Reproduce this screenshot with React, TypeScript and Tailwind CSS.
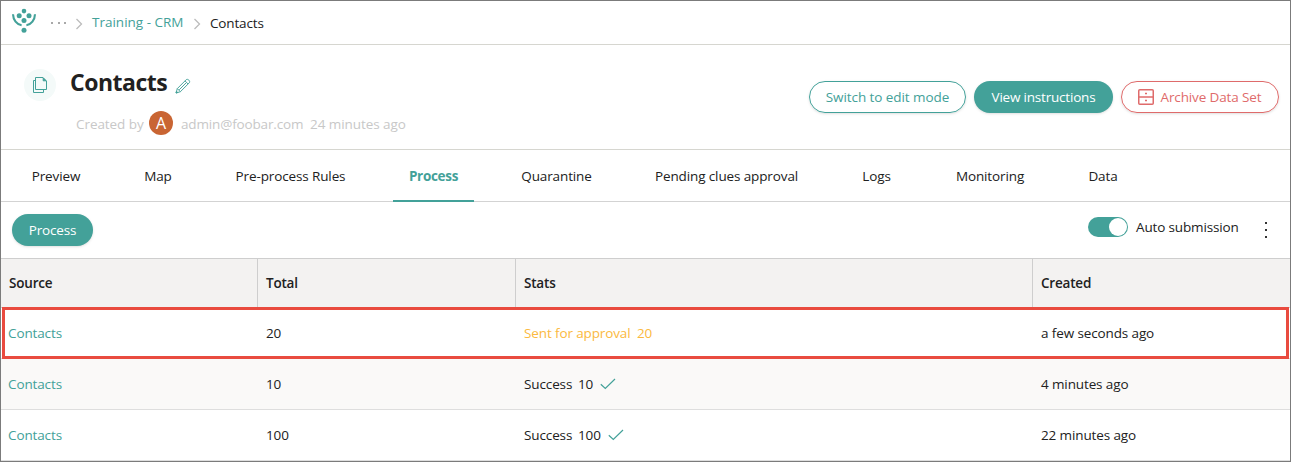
import React from "react";

const tabs = [
  { label: "Preview", box: "w-[80px]" },
  { label: "Map", box: "w-[60px]" },
  { label: "Pre-process Rules", box: "w-[141px]" },
  { label: "Process", box: "w-[81px]", active: true },
  { label: "Quarantine", box: "w-[101px]" },
  { label: "Pending clues approval", box: "w-[175px]" },
  { label: "Logs", box: "w-[61px]" },
  { label: "Monitoring", box: "w-[102px]" },
  { label: "Data", box: "w-[60px]" },
];

const rows = [
  { total: "20", status: "Sent for approval", count: "20", created: "a few seconds ago", pending: true },
  { total: "10", status: "Success", count: "10", created: "4 minutes ago" },
  { total: "100", status: "Success", count: "100", created: "22 minutes ago" },
];

const columns = "grid grid-cols-[257px_258px_517px_1fr]";

function Logo() {
  return (
    <svg width="26" height="26" viewBox="0 0 26 26" className="shrink-0" fill="#43a199">
      <path d="M2 6.2C2.2 12 5.8 16.6 10.6 17.3M24 6.2C23.8 12 20.2 16.6 15.4 17.3" fill="none" stroke="#43a199" strokeWidth="2.1" />
      <circle cx="13" cy="3.1" r="2.3" />
      <circle cx="8.2" cy="7.8" r="2.5" />
      <circle cx="18" cy="7.8" r="2.5" />
      <circle cx="13" cy="12.4" r="2.5" />
      <circle cx="13" cy="22.3" r="2.5" />
    </svg>
  );
}

function Chevron() {
  return (
    <svg width="8" height="12" viewBox="0 0 8 12" fill="none" stroke="#bcbcbc" strokeWidth="1.3">
      <path d="M1.5 1L6.5 6L1.5 11" />
    </svg>
  );
}

function Check() {
  return (
    <svg width="16" height="12" viewBox="0 0 16 12" fill="none" stroke="#43a199" strokeWidth="1.2">
      <path d="M0.8 6.2L5.3 10.5L15 1" />
    </svg>
  );
}

function Copy() {
  return (
    <svg width="16" height="18" viewBox="0 0 16 18" fill="none" stroke="#43a199" strokeWidth="1">
      <path d="M3.5 1.5H11L14.500 5V13.500H3.500Z" />
      <path d="M11.2 2V4.800H14Z" fill="#43a199" />
      <path d="M3.5 4.500H1.500V16.500H11.500V13.500" />
    </svg>
  );
}

function Pencil() {
  return (
    <svg width="16" height="16" viewBox="0 0 16 16" fill="none" stroke="#43a199" strokeWidth="0.95">
      <path d="M1 15L2.3 10.6L11.2 1.7C12.8 0.3 15.7 3.2 14.3 4.8L5.4 13.7ZM2.3 10.6L5.4 13.7M10 2.9L13.1 6M11 5L4.2 11.8" />
      <path d="M1 15L1.5 13.2L2.8 14.5Z" fill="#43a199" />
    </svg>
  );
}

function Cabinet() {
  return (
    <svg width="16" height="16" viewBox="0 0 16 16" fill="none" stroke="#df6b6b" strokeWidth="1.5">
      <rect x="0.75" y="0.75" width="14.5" height="14.5" rx="1" />
      <path d="M0.7 8H15.3M7 4.5H9M7 11.5H9" />
    </svg>
  );
}

export default function App() {
  return (
    <div className="flex h-[462px] w-[1291px] flex-col overflow-hidden border border-[#7b7b7b] bg-white font-['Open_Sans','Noto_Sans',sans-serif] text-[13.5px] leading-5 tracking-[-0.07px] whitespace-nowrap text-[#212121]">
      <header className="flex h-[44px] shrink-0 items-center border-b border-[#d6d6d0] pl-[10px]">
        <div className="flex h-full items-start pt-[7px]"><Logo /></div>
        <div className="ml-[14px] flex w-[15px] justify-between">
          <i className="size-[2px] bg-[#a9a9a9]" />
          <i className="size-[2px] bg-[#a9a9a9]" />
          <i className="size-[2px] bg-[#a9a9a9]" />
        </div>
        <div className="mt-[3px] ml-[9px]"><Chevron /></div>
        <a className="mb-px ml-[9px] w-[92px] tracking-[0px] text-[#43a199]">Training - CRM</a>
        <div className="mt-[3px] ml-[9px]"><Chevron /></div>
        <span className="ml-[9px] mt-px tracking-[-0.15px]">Contacts</span>
      </header>

      <section className="flex h-[105px] shrink-0 border-b border-[#d6d6d0]">
        <div className="mt-[24px] ml-[23px] flex size-8 shrink-0 items-center justify-center rounded-full bg-[#f4faf9]">
          <Copy />
        </div>
        <div className="ml-[14px] w-[739px]">
          <div className="flex h-[49px] items-end">
            <h1 className="w-[99px] text-[23px] leading-[24px] font-bold tracking-[-0.5px]">Contacts</h1>
            <div className="ml-[6px]"><Pencil /></div>
          </div>
          <div className="mt-[17px] flex h-6 items-center pl-[6px] text-[#c8c8c8]">
            <span className="mt-[2px] w-[73px]">Created by</span>
            <span className="flex size-6 items-center justify-center rounded-full bg-[#c96533] text-[16px] text-white">A</span>
            <span className="mt-[2px] ml-[8px] w-[129px] tracking-[-0.15px]">admin@foobar.com</span>
            <span className="mt-[2px]">24 minutes ago</span>
          </div>
        </div>
        <div className="mt-[36px] flex h-8 gap-2">
          <button className="flex w-[157px] items-center justify-center rounded-full border border-[#43a199] text-[#43a199] shadow-sm">Switch to edit mode</button>
          <button className="flex w-[139px] items-center justify-center rounded-full bg-[#43a199] tracking-[-0.2px] text-white shadow-sm">View instructions</button>
          <button className="flex w-[158px] items-center justify-center gap-[6px] rounded-full border border-[#df6b6b] tracking-[-0.12px] text-[#df6b6b] shadow-sm"><Cabinet />Archive Data Set</button>
        </div>
      </section>

      <nav className="flex h-[52px] shrink-0 gap-8 border-b border-[#d3d3d3] pl-[15px]">
        {tabs.map((t) => (
          <div key={t.label} className={`flex h-[52px] shrink-0 justify-center border-b-2 pt-[16px] ${t.box} ${t.active ? "border-[#43a199] font-bold tracking-[-0.3px] text-[#43a199]" : "border-transparent tracking-[-0.12px]"}`}>
            {t.label}
          </div>
        ))}
      </nav>

      <div className="flex h-[56px] shrink-0 items-center pl-[11px]">
        <button className="flex h-8 w-[81px] items-center justify-center rounded-full bg-[#43a199] tracking-[-0.2px] text-white shadow-sm">Process</button>
        <div className="mb-[6px] ml-[995px] flex h-5 w-10 justify-end rounded-full bg-[#43a199] p-px">
          <span className="size-[18px] rounded-full bg-white" />
        </div>
        <span className="mb-[6px] ml-[8px] w-[103px] tracking-[-0.15px]">Auto submission</span>
        <div className="ml-[26px] flex h-[16px] w-[2px] flex-col justify-between">
          <i className="size-[2px] bg-[#333]" />
          <i className="size-[2px] bg-[#333]" />
          <i className="size-[2px] bg-[#333]" />
        </div>
      </div>

      <div className="relative flex-1">
        <div className={`${columns} h-[50px] border-y border-[#cecece] bg-[#f3f2f1] leading-[48px] font-semibold tracking-[-0.2px]`}>
          <div className="border-r border-[#cecece] pl-[8px]">Source</div>
          <div className="border-r border-[#cecece] pl-[8px]">Total</div>
          <div className="border-r border-[#cecece] pl-[8px]">Stats</div>
          <div className="pl-[8px]">Created</div>
        </div>
        {rows.map((r, i) => (
          <div key={i} className={`${columns} h-[51px] border-b border-[#dedede] leading-[50px] tracking-[-0.12px] ${i === 1 ? "bg-[#faf9f8]" : ""}`}>
            <div className="pl-[7px] text-[#43a199]">Contacts</div>
            <div className="pl-[8px]">{r.total}</div>
            <div className={`flex items-center pl-[8px] ${r.pending ? "text-[#fbb940]" : ""}`}>
              <span className={r.pending ? "w-[113px]" : "w-[54px]"}>{r.status}</span>
              <span className="mr-[7px]">{r.count}</span>
              {!r.pending && <Check />}
            </div>
            <div className="pl-[8px]">{r.created}</div>
          </div>
        ))}
        <div className="absolute top-[49px] left-px h-[52px] w-[1287px] border-3 border-[#e94b3f]" />
      </div>
    </div>
  );
}
